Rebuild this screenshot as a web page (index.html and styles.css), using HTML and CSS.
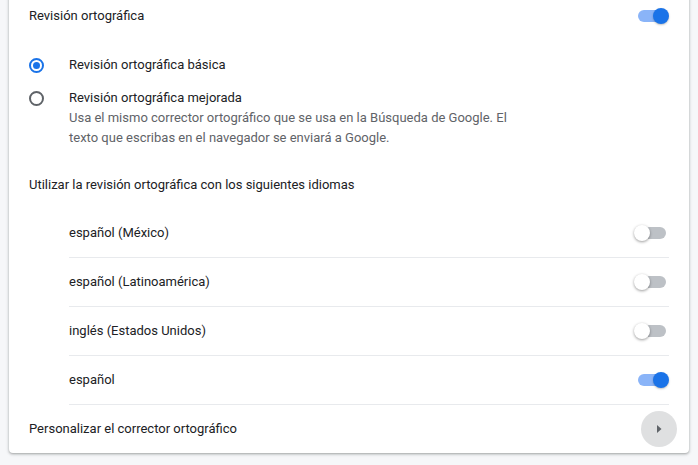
FILE: index.html
```html
<!DOCTYPE html>
<html lang="es">
<head>
<meta charset="utf-8">
<title>Revisión ortográfica</title>
<link rel="stylesheet" href="styles.css">
</head>
<body>
<div class="card">
  <div class="row head">
    <span class="label">Revisión ortográfica</span>
    <span class="toggle on"><span class="bar"></span><span class="knob"></span></span>
  </div>
  <div class="radios">
    <div class="radio-item">
      <span class="radio checked"></span>
      <div class="radio-text"><div class="label">Revisión ortográfica básica</div></div>
    </div>
    <div class="radio-item">
      <span class="radio"></span>
      <div class="radio-text">
        <div class="label">Revisión ortográfica mejorada</div>
        <div class="desc">Usa el mismo corrector ortográfico que se usa en la Búsqueda de Google. El texto que escribas en el navegador se enviará a Google.</div>
      </div>
    </div>
  </div>
  <div class="row head">
    <span class="label">Utilizar la revisión ortográfica con los siguientes idiomas</span>
  </div>
  <div class="langs">
    <div class="row lang">
      <span class="label">español (México)</span>
      <span class="toggle"><span class="bar"></span><span class="knob"></span></span>
    </div>
    <div class="row lang">
      <span class="label">español (Latinoamérica)</span>
      <span class="toggle"><span class="bar"></span><span class="knob"></span></span>
    </div>
    <div class="row lang">
      <span class="label">inglés (Estados Unidos)</span>
      <span class="toggle"><span class="bar"></span><span class="knob"></span></span>
    </div>
    <div class="row lang">
      <span class="label">español</span>
      <span class="toggle on"><span class="bar"></span><span class="knob"></span></span>
    </div>
  </div>
  <div class="row head custom">
    <span class="label">Personalizar el corrector ortográfico</span>
    <span class="icon-btn">
      <svg width="10" height="10" viewBox="0 0 10 10"><path d="M3 1 L7.5 5 L3 9 Z" fill="#5f6368"/></svg>
    </span>
  </div>
</div>
</body>
</html>
```

FILE: styles.css
```css
html, body {
  margin: 0;
  padding: 0;
}
body {
  background: #f6f7f9;
  font-family: Roboto, "Liberation Sans", Arial, sans-serif;
  font-size: 13px;
  color: #202124;
  height: 465px;
  overflow: hidden;
}
.card {
  margin: -8px 0 0 9px;
  width: 680px;
  background: #fff;
  border-radius: 4px;
  box-shadow: 0 1px 2px rgba(60, 64, 67, 0.3), 0 1px 3px 1px rgba(60, 64, 67, 0.15);
}
.row {
  display: flex;
  align-items: center;
  justify-content: space-between;
  height: 48px;
}
.head {
  padding: 0 20px;
}
.label {
  line-height: 20px;
}
.toggle {
  position: relative;
  width: 36px;
  height: 16px;
  flex: none;
}
.toggle .bar {
  position: absolute;
  top: 2px;
  left: 7px;
  width: 26px;
  height: 12px;
  border-radius: 6px;
  background: #bdc1c6;
}
.toggle .knob {
  position: absolute;
  top: 0;
  left: 1px;
  width: 16px;
  height: 16px;
  border-radius: 50%;
  background: #fff;
  box-shadow: 0 1px 3px rgba(0, 0, 0, 0.4);
}
.toggle.on .bar {
  left: 5px;
  background: #8ab4f8;
}
.toggle.on .knob {
  left: 20px;
  background: #1a73e8;
  box-shadow: 0 1px 2px rgba(0, 0, 0, 0.25);
}
.radios {
  padding: 15px 20px 13px;
  display: flex;
  flex-direction: column;
  gap: 13px;
}
.radio-item {
  display: flex;
  align-items: flex-start;
}
.radio {
  box-sizing: border-box;
  width: 15px;
  height: 15px;
  margin: 3px 25px 0 0;
  border: 2px solid #5f6368;
  border-radius: 50%;
  flex: none;
  display: flex;
  align-items: center;
  justify-content: center;
}
.radio.checked {
  border-color: #1a73e8;
}
.radio.checked::after {
  content: "";
  width: 7px;
  height: 7px;
  border-radius: 50%;
  background: #1a73e8;
}
.desc {
  color: #5f6368;
  line-height: 20px;
  width: 450px;
}
.langs {
  padding: 0 20px 0 60px;
}
.lang {
  border-bottom: 1px solid #e8eaed;
}
.custom {
  padding-right: 12px;
}
.icon-btn {
  width: 36px;
  height: 36px;
  border-radius: 50%;
  background: #dfe0e1;
  display: flex;
  align-items: center;
  justify-content: center;
}
```
